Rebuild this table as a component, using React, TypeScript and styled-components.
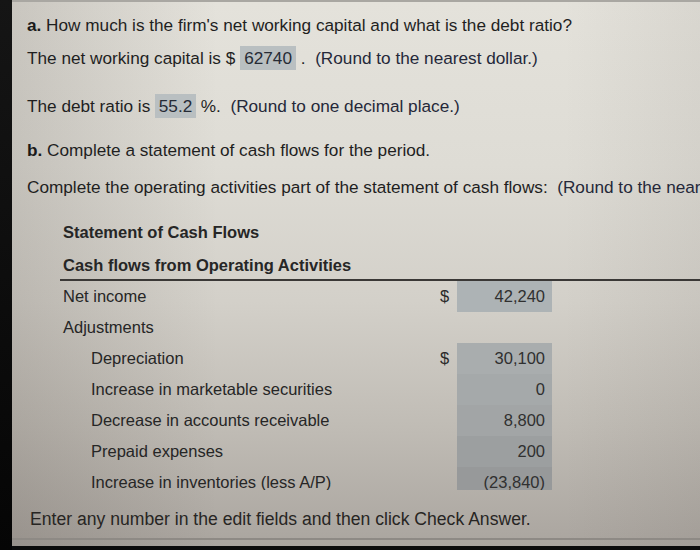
import React from 'react';
import styled, { createGlobalStyle } from 'styled-components';

const GlobalStyle = createGlobalStyle`
  html, body {
    margin: 0;
    padding: 0;
    background: #0c0c0c;
  }
  body {
    font-family: 'Liberation Sans', Arial, sans-serif;
  }
`;

const Frame = styled.div`
  display: flex;
  width: 700px;
  height: 550px;
  background: #0c0c0c;
  overflow: hidden;
`;

const Bezel = styled.div`
  width: 12px;
  flex-shrink: 0;
  background: linear-gradient(to bottom, #151515, #050505);
`;

const Screen = styled.div`
  flex: 1;
  display: flex;
  flex-direction: column;
  height: 546px;
  border-top: 2px solid #a9a7a2;
  padding: 11px 0 0 15px;
  box-sizing: border-box;
  overflow: hidden;
  white-space: nowrap;
  color: #1f1f1f;
  background:
    linear-gradient(to right, rgba(40, 30, 25, 0.14), rgba(0, 0, 0, 0) 30%, rgba(0, 0, 0, 0) 80%, rgba(40, 30, 25, 0.06)),
    linear-gradient(to bottom, #e4e2db 0%, #dedcd5 30%, #d3d0c9 55%, #c0bcb5 78%, #aaa59f 100%);
`;

const Line = styled.div<{ gap: number }>`
  height: 24px;
  line-height: 24px;
  margin-top: ${(p) => p.gap}px;
  font-size: 17.2px;
`;

const Hint = styled.span`
  color: #252839;
`;

const Strong = styled.b`
  color: #1a1a1a;
`;

const Answer = styled.span<{ w: number }>`
  display: inline-block;
  width: ${(p) => p.w}px;
  height: 24px;
  text-align: center;
  background: #b9bfc1;
  color: #262b35;
`;

const TableWrap = styled.div`
  margin: 21px 0 0 33px;
  height: 270px;
  overflow: hidden;
  flex-shrink: 0;
`;

const TableTitle = styled.div`
  height: 24px;
  line-height: 24px;
  padding-left: 3px;
  font-size: 16.5px;
  font-weight: 700;
  color: #262626;
`;

const SectionHead = styled(TableTitle)`
  margin-top: 9px;
  padding-bottom: 2px;
  border-bottom: 2px solid #3a3836;
  margin-right: -20px;
`;

const Row = styled.div`
  display: grid;
  grid-template-columns: 380px 17px 95px;
  height: 31px;
  align-items: stretch;
`;

const Label = styled.div<{ indent?: boolean }>`
  display: flex;
  align-items: center;
  padding-left: ${(p) => (p.indent ? 31 : 3)}px;
  font-size: 16.5px;
  color: #262626;
`;

const Dollar = styled.div`
  display: flex;
  align-items: center;
  font-size: 16.5px;
  color: #2a2a2a;
`;

const Cell = styled.div<{ filled?: boolean; tone?: string }>`
  display: flex;
  align-items: center;
  justify-content: flex-end;
  padding-right: 7px;
  font-size: 16.5px;
  color: #303030;
  background: ${(p) => (p.filled ? p.tone || '#aeb2b3' : 'transparent')};
`;

const Footer = styled.div`
  margin: 17px 0 0 -15px;
  height: 24px;
  line-height: 24px;
  font-size: 17.6px;
  padding: 0 0 7px 18px;
  color: #272523;
  border-bottom: 2px solid #8e8a85;
`;

type Item = { label: string; value: string; dollar?: boolean; indent?: boolean; filled?: boolean; tone?: string };

const rows: Item[] = [
  { label: 'Net income', value: '42,240', dollar: true, filled: true, tone: '#adb3b5' },
  { label: 'Adjustments', value: '' },
  { label: 'Depreciation', value: '30,100', dollar: true, indent: true, filled: true, tone: '#a9adae' },
  { label: 'Increase in marketable securities', value: '0', indent: true, filled: true, tone: '#a5a9aa' },
  { label: 'Decrease in accounts receivable', value: '8,800', indent: true, filled: true, tone: '#a2a5a6' },
  { label: 'Prepaid expenses', value: '200', indent: true, filled: true, tone: '#9c9fa0' },
  { label: 'Increase in inventories (less A/P)', value: '(23,840)', indent: true, filled: true, tone: '#97999a' },
];

export default function App() {
  return (
    <Frame>
      <GlobalStyle />
      <Bezel />
      <Screen>
        <Line gap={0}>
          <Strong>a.</Strong> How much is the firm's net working capital and what is the debt ratio?
        </Line>
        <Line gap={9}>
          The net working capital is $ <Answer w={56}>62740</Answer> . <Hint>&nbsp;(Round to the nearest dollar.)</Hint>
        </Line>
        <Line gap={24}>
          The debt ratio is <Answer w={41}>55.2</Answer> %. <Hint>&nbsp;(Round to one decimal place.)</Hint>
        </Line>
        <Line gap={20}>
          <Strong>b.</Strong> Complete a statement of cash flows for the period.
        </Line>
        <Line gap={13}>
          Complete the operating activities part of the statement of cash flows: <Hint>&nbsp;(Round to the nearest dollar.)</Hint>
        </Line>
        <TableWrap>
          <TableTitle>Statement of Cash Flows</TableTitle>
          <SectionHead>Cash flows from Operating Activities</SectionHead>
          {rows.map((r) => (
            <Row key={r.label}>
              <Label indent={r.indent}>{r.label}</Label>
              <Dollar>{r.dollar ? '$' : ''}</Dollar>
              <Cell filled={r.filled} tone={r.tone}>
                {r.value}
              </Cell>
            </Row>
          ))}
        </TableWrap>
        <Footer>Enter any number in the edit fields and then click Check Answer.</Footer>
      </Screen>
    </Frame>
  );
}
